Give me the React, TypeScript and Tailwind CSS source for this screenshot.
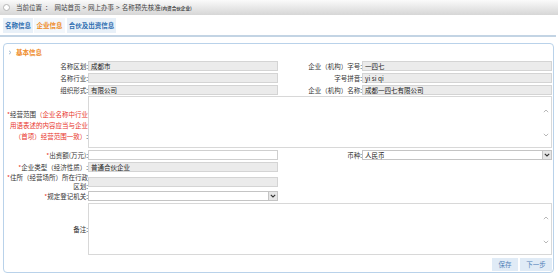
import React from "react";

const F = "font-['Noto_Sans_CJK_SC','Noto_Sans',sans-serif]";

function Label({ children, className = "leading-[10px]" }: { children: React.ReactNode; className?: string }) {
  return (
    <div className={`w-[84px] shrink-0 text-right text-[#333] ${className}`}>{children}</div>
  );
}

function Field({ v = "", gray = true, w = "w-[190px]", h = "h-[10px]" }: { v?: string; gray?: boolean; w?: string; h?: string }) {
  return (
    <div
      className={`${w} ${h} shrink-0 border ${gray ? "bg-[#ebebeb] border-[#d4d4d4]" : "bg-white border-[#cfcfcf]"} flex items-center pl-[2px] text-[#222] leading-none`}
    >
      {v}
    </div>
  );
}

function Select({ v = "", w = "w-[190px]" }: { v?: string; w?: string }) {
  return (
    <div className={`${w} h-[10px] shrink-0 border border-[#c4c4c4] bg-white flex items-center justify-between pl-[2px] text-[#222] leading-none`}>
      <span>{v}</span>
      <span className="w-[9px] h-[8px] bg-[#e6e6e6] border-l border-[#c4c4c4] flex items-center justify-center">
        <svg width="6" height="4" viewBox="0 0 6 4">
          <path d="M0.8 0.8 L3 3 L5.2 0.8" stroke="#333" strokeWidth="1.1" fill="none" />
        </svg>
      </span>
    </div>
  );
}

function TextArea({ h }: { h: string }) {
  return (
    <div className={`relative flex-1 ${h} border border-[#d8d8d8] bg-white`}>
      <svg className="absolute right-[2px] top-[12px]" width="6" height="4" viewBox="0 0 6 4">
        <path d="M0.8 3.2 L3 1 L5.2 3.2" stroke="#b0b0b0" strokeWidth="0.9" fill="none" />
      </svg>
      <svg className="absolute right-[2px] bottom-[10px]" width="6" height="4" viewBox="0 0 6 4">
        <path d="M0.8 0.8 L3 3 L5.2 0.8" stroke="#b0b0b0" strokeWidth="0.9" fill="none" />
      </svg>
    </div>
  );
}

const R = "text-[#e8332a]";

export default function App() {
  return (
    <div className={`w-[558px] h-[279px] bg-white overflow-hidden text-[6.5px] ${F}`}>
      {/* breadcrumb */}
      <div className="h-[15px] bg-gradient-to-b from-[#fbfbfb] to-[#d6d6d6] flex items-center pl-[3px] text-[#444] leading-none">
        <span className="w-[7px] h-[7px] rounded-full border border-[#b5b5b5] bg-white mr-[6px]" />
        <span>当前位置</span>
        <span className="mx-[3px]">：</span>
        <span>网站首页</span>
        <span className="mx-[2px]">&gt;</span>
        <span>网上办事</span>
        <span className="mx-[2px]">&gt;</span>
        <span>名称预先核准</span>
        <span className="font-bold text-[4.6px] mt-[1px]">(内资合伙企业)</span>
      </div>
      {/* tabs */}
      <div className="mt-[3px] h-[15px] flex gap-[1px] pl-[3px] font-bold">
        <div className="w-[30px] bg-[#e8f0f8] text-[#2d6db0] flex items-center justify-center leading-none">名称信息</div>
        <div className="w-[31px] bg-[#f3f7fb] text-[#ee8a26] flex items-center justify-center leading-none">企业信息</div>
        <div className="w-[49px] ml-[1px] bg-[#e8f0f8] text-[#2d6db0] flex items-center justify-center leading-none">合伙及出资信息</div>
      </div>
      <div className="mt-[2px] h-[2px] w-[556px] bg-[#c3d4e4]" />
      {/* panel */}
      <div className="mt-[6px] ml-[3px] w-[551px] h-[230px] border border-[#b9d2ea] rounded-[4px] flex flex-col">
        <div className="h-[9px] mt-[4px] flex items-center pl-[4px] text-[#ee8a26] font-bold leading-none">
          <svg width="4" height="5" viewBox="0 0 4 5" className="mr-[4px]">
            <path d="M1 0.8 L3 2.5 L1 4.2" stroke="#9ab3cc" strokeWidth="0.9" fill="none" />
          </svg>
          基本信息
        </div>
        <div className="mt-[4px] flex flex-col">
          <div className="flex items-center h-[10px]">
            <Label>名称区划:</Label>
            <Field v="成都市" />
            <Label>企业（机构）字号:</Label>
            <Field v="一四七" />
          </div>
          <div className="flex items-center h-[10px] mt-[2px]">
            <Label>名称行业:</Label>
            <Field />
            <Label>字号拼音:</Label>
            <Field v="yi si qi" />
          </div>
          <div className="flex items-center h-[10px] mt-[2px]">
            <Label>组织形式:</Label>
            <Field v="有限公司" />
            <Label>企业（机构）名称:</Label>
            <Field v="成都一四七有限公司" />
          </div>
          {/* 经营范围 */}
          <div className="flex h-[52px] mt-[1px] pr-[1px]">
            <div className="w-[84px] shrink-0 text-right leading-[11px] pt-[13px]">
              <span className={R}>*</span>
              <span className="text-[#333]">经营范围</span>
              <span className={R}>（企业名称中行业</span>
              <br />
              <span className={R}>用语表述的内容应当与企业</span>
              <br />
              <span className={R}>（首项）经营范围一致）</span>
              <span className="text-[#333]">:</span>
            </div>
            <TextArea h="h-[52px]" />
          </div>
          <div className="flex items-center h-[10px] mt-[2px]">
            <Label>
              <span className={R}>*</span>出资额(万元):
            </Label>
            <Field gray={false} />
            <Label>币种:</Label>
            <Select v="人民币" />
          </div>
          <div className="flex items-center h-[10px] mt-[2px]">
            <Label>
              <span className={R}>*</span>企业类型（经济性质）:
            </Label>
            <Field v="普通合伙企业" />
          </div>
          <div className="flex items-center h-[14px] mt-[3px]">
            <div className="w-[84px] h-[14px] shrink-0 flex flex-col items-end justify-center gap-[2px] text-[#333] leading-[7px]">
              <span>
                <span className={R}>*</span>住所（经营场所）所在行政
              </span>
              <span>区划:</span>
            </div>
            <Field />
          </div>
          <div className="flex items-center h-[10px] mt-[2px]">
            <Label className="leading-[7px]">
              <span className={R}>*</span>规定登记机关:
            </Label>
            <Select />
          </div>
          <div className="flex items-center h-[52px] mt-[2px] pr-[1px]">
            <Label>备注:</Label>
            <TextArea h="h-[52px]" />
          </div>
          <div className="flex justify-end gap-[2px] mt-[3px] pr-[1px]">
            <div className="w-[26px] h-[13px] bg-[#e0ebf6] text-[#4f80b6] flex items-center justify-center leading-none">保存</div>
            <div className="w-[32px] h-[13px] bg-[#e0ebf6] text-[#4f80b6] flex items-center justify-center leading-none">下一步</div>
          </div>
        </div>
      </div>
    </div>
  );
}
